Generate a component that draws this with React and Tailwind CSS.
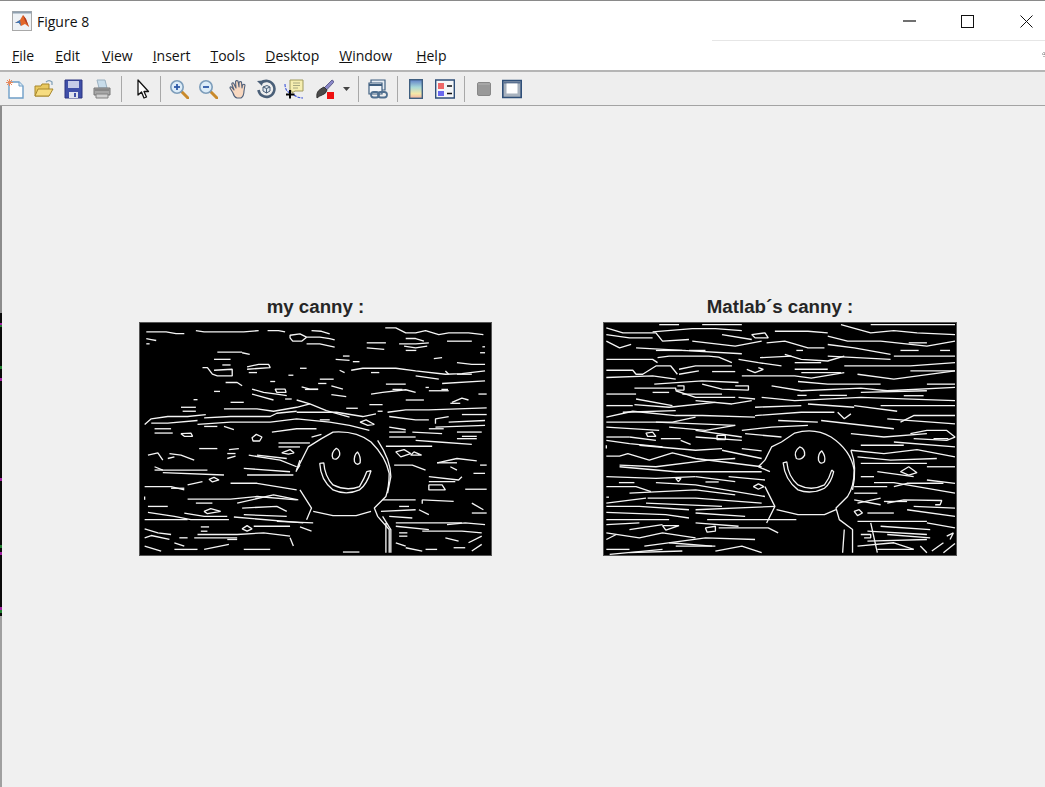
import React from 'react';

const menus = [
  { label: 'File', ml: 'ml-[12px]' },
  { label: 'Edit', ml: 'ml-[21px]' },
  { label: 'View', ml: 'ml-[22px]' },
  { label: 'Insert', ml: 'ml-[20px]' },
  { label: 'Tools', ml: 'ml-[20px]' },
  { label: 'Desktop', ml: 'ml-[20px]' },
  { label: 'Window', ml: 'ml-[20px]' },
  { label: 'Help', ml: 'ml-[24px]' },
];

// left edge of the figure area: what shows of the window behind
const strip = [
  'h-[207px] bg-[#8c8c8c]', 'h-[10px] bg-[#0a0a0a]', 'h-[2px] bg-[#a020a0]', 'h-[2px] bg-[#208030]',
  'h-[39px] bg-[#0a0a0a]', 'h-[3px] bg-[#208030]', 'h-[9px] bg-[#0a0a0a]', 'h-[3px] bg-[#a020a0]',
  'h-[97px] bg-[#0a0a0a]', 'h-[3px] bg-[#a020a0]', 'h-[64px] bg-[#0a0a0a]', 'h-[3px] bg-[#208030]',
  'h-[4px] bg-[#0a0a0a]', 'h-[3px] bg-[#a020a0]', 'h-[52px] bg-[#0a0a0a]', 'h-[3px] bg-[#a020a0]',
  'h-[3px] bg-[#208030]', 'h-[3px] bg-[#0a0a0a]', 'flex-1 bg-[#a0a0a0]',
];

const leftEdges = [
  'M45 122H105L135 127H160', 'M195 118L220 122H340L385 118', 'M412 118H445L465 122',
  'M480 132L510 128L530 138L515 150H488L480 140Z', 'M545 118L575 120L600 128', 'M530 138H570L600 142L615 146',
  'M530 158H570L615 168', 'M768 110H800L830 125H860L890 118L930 130L960 125H1020L1065 130', 'M712 155H770',
  'M712 170L765 175', 'M810 158H860L900 155', 'M830 142H860L885 150', 'M825 165L860 170L895 165', 'M830 178H862',
  'M955 150H1030', 'M45 142L60 145L75 148', 'M45 158H55', 'M260 183H320L335 183', 'M335 185L358 190',
  'M1055 185H1070', 'M1062 167H1070', 'M250 205H300', 'M275 222H300', 'M640 195H660', 'M618 205L660 208',
  'M670 212H690', 'M915 203L940 200', 'M985 215L1030 220H1070', 'M350 228L385 220H415L420 230L350 235',
  'M355 245H380', 'M215 230H230L245 250L260 255H305V235L250 238', 'M510 232H530', 'M475 253H490', 'M630 238L645 245',
  'M665 238L700 232H800L860 240L950 250L1000 248L1070 240', 'M950 240L960 250', 'M725 245H750', 'M860 255L930 265',
  'M985 250H1030', 'M570 265H612', 'M285 275H320L335 285', 'M420 272H435', 'M565 278H590', 'M515 288L540 295H565',
  'M525 296H565', 'M605 285L640 295', 'M770 280H830', 'M940 278L1070 270', 'M890 290H900', 'M900 300H960',
  'M938 296H958', 'M725 310L760 305L830 297L860 305', 'M790 296H820', 'M1050 310H1075', 'M250 302H268',
  'M365 295L400 305L440 310L470 315', 'M365 310L430 328', 'M435 295H465L468 305H440Z', 'M465 325H485',
  'M500 328L540 340L590 360L660 380', 'M605 312L650 318', 'M830 328H885', 'M970 335L1000 322L1020 328',
  'M188 327H200', 'M150 350H195', 'M155 362H195', 'M280 355H380L430 362L500 350L540 340', 'M300 335H340',
  'M650 353H685', 'M720 342H760', 'M745 362H760', 'M775 365L830 358H900L1075 352', 'M965 338H995',
  'M40 402L60 385L110 378H170L225 372', 'M60 398H110L200 390', 'M220 382L300 378H420L440 368L500 362',
  'M200 402L300 395H420L500 385L600 395L660 405L720 420', 'M500 365H620L700 378L740 370', 'M570 388H600',
  'M692 395L710 388L735 402L715 405Z', 'M780 378L860 388H900', 'M920 400V385L960 378', 'M1000 372H1075', 'M960 395L1070 390',
  'M70 415H120', 'M70 428H125', 'M220 408H260', 'M280 408L310 418', 'M150 430L180 428L185 438H160Z',
  'M365 442L378 432L395 440L388 452H368Z', 'M425 425L500 415H560', 'M545 440L575 432', 'M780 410L830 418', 'M780 425H830',
  'M780 440H860', 'M850 425L940 430', 'M900 415H945', 'M920 410L1070 405', 'M985 425H1060', 'M985 445H1045', 'M1000 438H1045',
  'M860 450L930 455L1030 462', 'M770 468H910', 'M445 458H540', 'M445 470H510', 'M205 475H260', 'M295 478L325 475', 'M290 490H315',
  'M290 505L315 498', 'M50 495L80 488L95 510', 'M115 490L150 495L190 510', 'M110 505L130 500', 'M355 495L450 510L500 530',
  'M380 495L470 505', 'M455 488L480 478L492 488L475 492Z', 'M800 485L825 478L845 490L815 500Z', 'M845 495L855 485L878 495Z',
  'M795 525H850L890 540', 'M925 518L985 505L1045 512', 'M925 518H985', 'M1055 525H1075', 'M965 530L985 540',
  'M70 530L95 540H230', 'M70 540H95', 'M95 548L280 555', 'M340 535L480 545', 'M350 555H490', 'M40 590H120L160 600',
  'M120 595H160', 'M235 568L250 562L265 570L245 576Z', 'M170 585L215 575', 'M300 580H380L500 600', 'M900 560L990 570L1000 560',
  'M900 575H980', 'M900 585H940L950 600H900Z', 'M1010 598H1075', 'M1035 550H1070', 'M170 628H300L380 620L500 630',
  'M195 640H245', 'M40 620V630', 'M320 640L430 615L505 630', 'M760 630H860', 'M880 630L975 635', 'M880 630V642',
  'M810 650H840', 'M1030 640L1065 660', 'M50 650H110', 'M50 668L130 680L180 690H295', 'M40 690H170', 'M220 665L240 657L270 665L230 672Z',
  'M160 670L220 680H290', 'M335 655L440 650L470 665', 'M340 675L470 680', 'M310 682L520 700', 'M440 695L550 700',
  'M755 665L860 660', 'M780 680L850 685', 'M800 700H1000', 'M870 660L900 675', 'M1030 670H1075', 'M800 710L900 720',
  'M955 705L1010 700L1070 705', 'M210 712H235', 'M210 725H230', 'M335 718L350 708L365 718L350 725Z', 'M40 718L80 730L120 735',
  'M40 745L60 738L115 750', 'M145 745H170', 'M200 735H320L400 730L480 740', 'M190 745H320', 'M290 750H320', 'M370 710H480',
  'M510 712L545 725', 'M130 760L160 770', 'M220 780L295 765', 'M130 780H200', 'M40 770L90 785', 'M340 780H420', 'M480 745L490 770',
  'M810 730H835', 'M810 740H835', 'M880 725H1000L1060 730', 'M950 745L990 755', 'M1020 760L1060 740', 'M830 775L880 785', 'M890 780H925',
  'M975 775H1010', 'M1030 785L1060 765', 'M640 788H690', 'M800 760L830 770',
];

const rightEdges = [
  'M190 100H250', 'M320 100H440', 'M30 110L80 125H180L200 150L280 145', 'M170 122L290 112H360L440 118',
  'M470 130L510 125L520 140H480Z', 'M540 120H640L700 125', 'M740 100L830 125L900 118L970 125L1085 130', 'M830 100H1085',
  'M30 150L70 170L105 160', 'M515 155L570 150L640 170H690', 'M700 135L760 150H860L1000 165L1085 150', 'M700 160L780 170L890 190',
  'M180 178H270', 'M280 178H330', 'M120 170L260 178L440 188', 'M945 155H1000', 'M920 178H975', 'M1040 178H1070', 'M605 178H625',
  'M185 200L220 195H340L370 198L410 215', 'M570 190L620 205L700 210L750 195', 'M700 195L890 205', 'M495 200L590 195',
  'M600 215H680', 'M30 238H110L120 250H140L180 225H225L245 250', 'M250 235L300 225H350L410 225', 'M455 235L480 245L505 235L490 230',
  'M250 250L310 240', 'M350 242H420', 'M440 255H600L650 262L750 245', 'M620 245H740', 'M790 250L900 265L1085 240', 'M950 240H1085',
  'M175 280L320 270L430 275', 'M115 292H240V298H265V285H245', 'M320 280L380 295L460 298V285H420', 'M610 272L700 280H860', 'M1000 280H1085',
  'M530 285L620 300L800 292L880 300L1085 290', 'M170 305H220', 'M260 310H380', 'M430 320L480 325', 'M608 314H636', 'M675 314H758',
  'M930 315H990', 'M120 325L230 345', 'M115 342L220 350L360 335', 'M300 330L410 340L470 330', 'M500 320L600 330L800 320L1085 330',
  'M860 345H1085', 'M30 380L110 362L240 375H320L480 380', 'M80 365L240 360', 'M30 395H230L300 380', 'M180 395L420 405', 'M480 375L620 365H720',
  'M730 365L750 385L770 370', 'M780 345L910 362', 'M920 395L960 375H1085', 'M680 390L900 415', 'M30 410L190 420', 'M220 410L330 420L420 405',
  'M440 420L530 410L640 405', 'M550 390L670 395', 'M880 385L1085 400', 'M150 428L170 425L180 438H155Z', 'M365 435H390V448H365Z', 'M195 445H255',
  'M255 450L285 462', 'M100 440L180 450', 'M770 430L870 440L1000 430', 'M950 430L1000 420H1060L1085 440L1060 450L960 445', 'M1020 445H1065',
  'M30 475V465', 'M130 465L300 480L380 475', 'M440 475L500 482', 'M450 430L560 440', 'M30 498H70L95 490L160 510L230 488L300 505L500 530',
  'M70 525L180 530L340 510L420 505', 'M380 480L500 505', 'M770 480L870 490L970 478L1085 500', 'M790 500L890 510L1030 505', 'M800 520H1000',
  'M70 530L240 545H500', 'M920 545L945 530L970 548L945 555Z', 'M850 545L960 560', 'M1000 530H1085', 'M68 578H115', 'M30 590H120L165 605',
  'M240 565H256L248 575Z', 'M300 560L420 575', 'M330 576H370', 'M180 578L300 585L510 620', 'M840 578H900L1085 610', 'M900 590L940 580H1050',
  'M475 590L490 582L507 590L490 598Z', 'M780 590H880', 'M780 610H850', 'M155 625H300L500 640', 'M150 640L380 650', 'M30 622H38', 'M870 635H940',
  'M880 640L930 630L1045 632L1040 645H1025', 'M780 630L860 645', 'M30 650H130L280 660', 'M30 668L210 675L280 685', 'M30 690H220', 'M300 660L540 650',
  'M300 670L450 680', 'M335 690H605', 'M780 665L795 660L805 670L790 678Z', 'M820 670H900', 'M940 660L1085 680', 'M790 695H1000', 'M860 710L1010 720',
  'M200 708H250L210 722Z', 'M330 715L360 710V725L335 728Z', 'M30 730L130 745L200 730L300 745', 'M370 715H520L550 730', 'M30 750L60 735', 'M100 720L200 705',
  'M145 770L330 745L480 750', 'M30 780H100', 'M40 795L200 780', 'M240 770H360', 'M360 785L440 770L500 790', 'M800 735H830V745H810', 'M880 735L1010 745',
  'M1060 740L1080 730L1070 750', 'M790 770L900 760L960 780', 'M980 770L1000 790', 'M1015 785L1050 760', 'M1050 790L1085 762', 'M850 780H960',
  'M30 130L100 140H170', 'M290 150L420 165L500 150', 'M380 130L470 145', 'M30 205H170L185 215', 'M430 205L490 215L560 225', 'M600 235H700',
  'M750 225H950L1085 215', 'M900 195H1085', 'M30 260L170 255L240 265', 'M30 310H120', 'M240 300L300 320H420', 'M640 340L780 350', 'M30 345H110',
  'M480 350L620 345', 'M800 305L1000 300', 'M30 440H100', 'M200 470L100 460L30 450', 'M300 440L440 450', 'M300 420L440 440', 'M900 455L1085 470',
  'M800 465H930', 'M30 560L180 565L300 560', 'M100 610L300 600L420 615', 'M30 640L150 625', 'M400 560L510 570', 'M800 560H840', 'M1000 570L1085 580',
  'M790 640L860 625', 'M960 650L1085 655', 'M1000 700L1085 715', 'M820 725L1000 735', 'M300 700L430 710', 'M30 705L130 700', 'M220 760L350 770',
  'M100 790L260 785', 'M820 755L1000 750',
];

const Smiley = ({ right }) =>
  right ? (
    <g>
      <path d="M510 510L530 470L560 455L600 428Q660 410 710 440Q770 480 780 540Q780 590 760 620L725 655L735 690L775 720V790" />
      <path d="M770 480Q790 530 775 600" />
      <path d="M510 510L490 530L525 545" />
      <path d="M510 590L540 650L515 700" />
      <path d="M545 660L610 675H690L725 660" />
      <path d="M615 470Q632 475 630 495Q620 512 605 505Q595 485 615 470Z" />
      <path d="M682 482Q695 500 690 515Q678 525 672 510Q670 490 682 482Z" />
      <path d="M565 518L576 515Q580 560 610 585Q650 605 690 585Q705 565 712 540L718 545Q710 580 690 595Q650 615 610 600Q570 570 565 518Z" />
      <path d="M750 720L745 790M830 700L850 790" />
    </g>
  ) : (
    <g>
      <path d="M510 525L500 540L535 470L575 445L610 425Q680 420 725 455Q770 500 780 550Q780 590 770 620L735 655L745 680L780 720V790" />
      <path d="M745 450Q785 510 785 560L775 610" />
      <path d="M510 510L498 545" />
      <path d="M510 600L545 655L530 690" />
      <path d="M550 665L610 678H680L725 665" />
      <path d="M620 474Q632 480 630 495Q622 512 610 505Q602 488 620 474Z" />
      <path d="M684 485Q695 500 692 518Q682 528 675 515Q672 495 684 485Z" />
      <path d="M570 520L582 518Q585 560 610 585Q650 605 690 590Q705 565 712 545L725 542Q712 585 690 600Q650 618 610 600Q572 570 570 520Z" />
      <path d="M760 680L785 720V790M770 700V790" />
    </g>
  );

const EdgePlot = ({ title, edges, right, viewBox, width }) => (
  <div className="flex flex-col items-center">
    <div className="h-[20px] mb-[5px] text-[18.7px] leading-[20px] font-bold text-[#262626] whitespace-nowrap [font-family:'Liberation_Sans',Arial,sans-serif]">
      {title}
    </div>
    <svg viewBox={viewBox} width={width} height="234" className="block bg-black border border-[#555555]">
      <g fill="none" stroke="#f4f4f4" strokeWidth="4" strokeLinejoin="bevel">
        {edges.map((d, i) => (
          <path key={i} d={d} />
        ))}
        <Smiley right={right} />
      </g>
    </svg>
  </div>
);

const Ico = ({ children, className = '' }) => (
  <svg width="20" height="20" viewBox="0 0 20 20" className={'block shrink-0 ' + className}>
    {children}
  </svg>
);

const Sep = ({ className = '' }) => <div className={'w-[1px] h-[26px] shrink-0 bg-[#a8a8a8] ' + className} />;

const MagGlass = ({ minus }) => (
  <>
    <path d="M12 12L19 19" stroke="#c98a2c" strokeWidth="3" strokeLinecap="round" />
    <circle cx="8" cy="8" r="6.2" fill="#dcecf8" stroke="#7d9dba" strokeWidth="1.6" />
    <path d="M5 8H11" stroke="#2d5aa8" strokeWidth="1.8" />
    {!minus && <path d="M8 5V11" stroke="#2d5aa8" strokeWidth="1.8" />}
  </>
);

const Toolbar = () => (
  <div className="h-[34px] shrink-0 flex items-center bg-[#eeeeee] border-b border-[#a3a3a3] pl-[6px]">
    {/* new */}
    <Ico>
      <path d="M3 3H13L17 7V19H3Z" fill="#ffffff" stroke="#6f9fc8" strokeWidth="1.4" />
      <path d="M13 3V7H17" fill="#dbe9f4" stroke="#6f9fc8" />
      <path d="M1 1L6 6M6 1L1 6M3.500 0V7M0 3.500H7" stroke="#e8895c" strokeWidth="1" />
    </Ico>
    {/* open */}
    <Ico className="ml-[8px]">
      <path d="M1 7H7L8 5H15V17H1Z" fill="#e8c860" stroke="#a8882c" />
      <path d="M1 17L4 10H19L15 17Z" fill="#f6dc80" stroke="#a8882c" />
      <path d="M12 3Q15 0 18 3L18 6" fill="none" stroke="#7f9fb8" strokeWidth="1.200" />
    </Ico>
    {/* save */}
    <Ico className="ml-[10px]">
      <path d="M1 1H18V19H1Z" fill="#3f4fa8" stroke="#2c3580" />
      <path d="M4 2H15V9H4Z" fill="#c5cbe8" />
      <path d="M5 13H14V19H5Z" fill="#dfe2ee" />
      <path d="M10 14H12V18H10Z" fill="#3f4fa8" />
    </Ico>
    {/* print */}
    <Ico className="ml-[8px]">
      <path d="M5 1H13L15 9H7Z" fill="#c8dcea" stroke="#9ab0c0" />
      <path d="M2 9H18V16H2Z" fill="#a6a6a6" stroke="#777777" />
      <path d="M4 15H16V19H4Z" fill="#d0d0d0" stroke="#808080" />
      <path d="M3 11H17" stroke="#6a6a6a" />
    </Ico>
    <Sep className="ml-[9px]" />
    {/* pointer */}
    <Ico className="ml-[11px]">
      <path d="M5 1V16L8.500 13L11 19L13.500 18L11 12.500H15.500Z" fill="#ffffff" stroke="#111111" strokeWidth="1.300" strokeLinejoin="round" />
    </Ico>
    <Sep className="ml-[7px]" />
    <Ico className="ml-[8px]"><MagGlass /></Ico>
    <Ico className="ml-[9px]"><MagGlass minus /></Ico>
    {/* hand */}
    <Ico className="ml-[9px]">
      <path d="M3 9L6 14Q7 18 10 19H14Q17 17 17 12L18 6Q17 4.500 15.500 6L15 9L14.500 3Q13 2 12 3.500L12 8L11 2Q9.500 1 8.500 2.500L9 9L6.500 4Q5 3.500 4.800 5L7 11L4.500 8Q3 7.500 3 9Z" fill="#f8d8c0" stroke="#50607a" strokeWidth="1.100" strokeLinejoin="round" />
    </Ico>
    {/* rotate */}
    <Ico className="ml-[9px]">
      <path d="M5 4A8 8 0 1 1 2.500 11" fill="none" stroke="#4a5f78" strokeWidth="2.600" />
      <path d="M1 2L7 1.500L6 7Z" fill="#4a5f78" />
      <path d="M7 8L11 6.500L14 8V12L10.500 14L7 12Z" fill="#dfe7ee" stroke="#4a5f78" />
      <path d="M7 8L10.500 9.500L14 8M10.500 9.500V14" fill="none" stroke="#4a5f78" />
    </Ico>
    {/* data cursor */}
    <Ico className="ml-[8px]">
      <path d="M6 1H19V12H11L8 14V12H6Z" fill="#f6eeb0" stroke="#a09a5c" />
      <path d="M9 4H16M9 6.500H16M9 9H14" stroke="#a8a880" />
      <path d="M1 5Q1 12 6 14M10 16Q14 19 19 19" fill="none" stroke="#3a52d8" strokeWidth="1.100" strokeDasharray="3 1" />
      <path d="M6 11V19.500M2 15.500H10.500" stroke="#000000" strokeWidth="2" />
    </Ico>
    {/* brush */}
    <Ico className="ml-[10px]">
      <path d="M10 9L18 1Q20 1.500 19.500 3.500L12.500 11Z" fill="#8a88c8" stroke="#606090" />
      <path d="M10 8L13 11Q12 15 8 16Q5 17 3 19Q2 13 6 10.500Q8 9 10 8Z" fill="#4a4a4a" stroke="#333333" />
      <path d="M13 13H20V20H13Z" fill="#ee1010" />
    </Ico>
    <svg width="7" height="4" viewBox="0 0 7 4" className="block shrink-0 ml-[9px]">
      <path d="M0 0H7L3.500 4Z" fill="#444444" />
    </svg>
    <Sep className="ml-[8px]" />
    {/* link */}
    <Ico className="ml-[9px]">
      <path d="M3 1H17V11H3Z" fill="#e6ecf2" stroke="#3f5f80" strokeWidth="1.200" />
      <path d="M1 4H14V15H1Z" fill="#f6f8fa" stroke="#3f5f80" strokeWidth="1.200" />
      <path d="M1 6H14" stroke="#3f5f80" strokeWidth="2" />
      <rect x="3" y="13" width="8" height="5.500" rx="2.700" fill="none" stroke="#4f6f90" strokeWidth="1.800" />
      <rect x="10" y="13" width="9" height="5.500" rx="2.700" fill="none" stroke="#4f6f90" strokeWidth="1.800" />
    </Ico>
    <Sep className="ml-[9px]" />
    {/* colorbar */}
    <svg width="14" height="20" viewBox="0 0 14 20" className="block shrink-0 ml-[11px]">
      <defs>
        <linearGradient id="cbar" x1="0" y1="0" x2="0" y2="1">
          <stop offset="0" stopColor="#5f7fc8" />
          <stop offset="0.4" stopColor="#a8d8d8" />
          <stop offset="0.75" stopColor="#f4e8a8" />
          <stop offset="1" stopColor="#f0b0a0" />
        </linearGradient>
      </defs>
      <rect x="0.700" y="0.700" width="12.600" height="18.600" fill="url(#cbar)" stroke="#3f5f80" strokeWidth="1.400" />
    </svg>
    {/* legend */}
    <Ico className="ml-[12px]">
      <path d="M0.700 1H19.300V19H0.700Z" fill="#f4f6f8" stroke="#2f4f78" strokeWidth="1.400" />
      <path d="M3 4H9V10H3Z" fill="#ee6868" />
      <path d="M3 12H9V17H3Z" fill="#6868ee" />
      <path d="M12 7H17M12 14.500H17" stroke="#111111" strokeWidth="1.500" />
    </Ico>
    <Sep className="ml-[9px]" />
    {/* plot tools, disabled */}
    <svg width="14" height="14" viewBox="0 0 14 14" className="block shrink-0 ml-[12px]">
      <rect x="0.500" y="0.500" width="13" height="13" rx="1.500" fill="#999999" stroke="#888888" />
      <path d="M1 2H13" stroke="#b5b5b5" />
    </svg>
    {/* plot tools */}
    <Ico className="ml-[11px]">
      <path d="M0.800 1.500H19.200V18.500H0.800Z" fill="#a8b2be" stroke="#2f4f78" strokeWidth="1.600" />
      <path d="M1.500 2.500H18.500V4.500H1.500Z" fill="#5a7090" />
      <path d="M4.500 4.500H15.500V14.500H4.500Z" fill="#ffffff" />
    </Ico>
  </div>
);

const App = () => {
  return (
    <div className="w-[1045px] h-[787px] overflow-hidden flex flex-col bg-white border-t border-[#8a8a8a] [font-family:'Open_Sans','Noto_Sans',sans-serif]">
      {/* title bar */}
      <div className="h-[40px] flex shrink-0">
        <div className="w-[712px] flex items-center pl-[12px]">
          <svg width="20" height="20" viewBox="0 0 20 20" className="block shrink-0">
            <rect x="0.500" y="0.500" width="19" height="19" fill="#eef2f6" stroke="#a8a8a8" />
            <path d="M0.500 0.500H19.500V2.500H0.500Z" fill="#8fa0b0" />
            <path d="M3 12L8 9L11 4L14 8L17 16L13 13L9 15L7 12Z" fill="#e2672a" />
            <path d="M3 12L8 9L9 15L7 12Z" fill="#3f78b8" />
            <path d="M11 4L14 8L17 16L13 10Z" fill="#b03a20" />
          </svg>
          <span className="ml-[5px] text-[14px] text-[#111111]">Figure 8</span>
        </div>
        <div className="flex-1 flex border-b border-[#e6e6e6]">
          <svg width="13" height="2" className="block mt-[19px] ml-[191px]"><path d="M0 1H13" stroke="#111111" strokeWidth="1.200" /></svg>
          <svg width="13" height="13" className="block mt-[14px] ml-[45px]"><rect x="0.500" y="0.500" width="12" height="12" fill="none" stroke="#111111" /></svg>
          <svg width="13" height="13" className="block mt-[14px] ml-[46px]"><path d="M0.500 0.500L12.500 12.500M12.500 0.500L0.500 12.500" stroke="#111111" /></svg>
        </div>
      </div>

      {/* menu bar */}
      <div className="h-[31px] shrink-0 flex items-center border-b-2 border-[#b5b5b5] relative">
        {menus.map((m) => (
          <span key={m.label} className={m.ml + ' text-[14px] text-[#111111]'}>
            <span className="underline">{m.label[0]}</span>
            {m.label.slice(1)}
          </span>
        ))}
        <svg width="4" height="6" className="absolute right-0 top-[11px]"><path d="M3 0V6M1 2H4" stroke="#777777" strokeDasharray="1 1" /></svg>
      </div>

      <Toolbar />

      {/* figure area */}
      <div className="flex-1 flex bg-[#f0f0f0]">
        <div className="w-[2px] flex flex-col shrink-0">
          {strip.map((c, i) => (
            <div key={i} className={c} />
          ))}
        </div>
        <div className="flex-1 flex pl-[137px] pt-[191px]">
          <EdgePlot title="my canny :" edges={leftEdges} width="353" viewBox="28 95 1058 702" />
          <div className="ml-[111px]">
            <EdgePlot title="Matlab´s canny :" edges={rightEdges} right width="354" viewBox="25 95 1061 702" />
          </div>
        </div>
      </div>
    </div>
  );
};

export default App;
